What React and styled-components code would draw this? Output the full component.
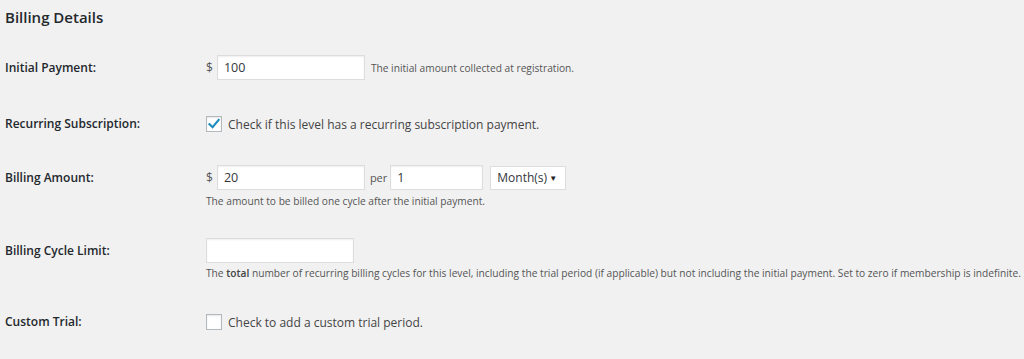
import React from 'react';
import styled, { createGlobalStyle } from 'styled-components';

const Global = createGlobalStyle`
  html, body {
    margin: 0;
    padding: 0;
    background: #f1f1f1;
  }
  body {
    font-family: "Open Sans", "Noto Sans", sans-serif;
    color: #23282d;
  }
`

const Page = styled.div`
  padding: 0 5px;
  width: 1024px;
  box-sizing: border-box;
`

const Title = styled.h2`
  margin: 0;
  padding-top: 7px;
  font-size: 15px;
  font-weight: 600;
  line-height: 20px;
  color: #23282d;
  height: 48px;
`

const Row = styled.div`
  display: flex;
  align-items: flex-start;
  margin-top: ${p => p.$top}px;
`

const Label = styled.div`
  width: 201px;
  flex-shrink: 0;
  font-size: 12px;
  font-weight: 600;
  line-height: ${p => p.$lh}px;
`

const Field = styled.div`
  display: flex;
  flex-direction: column;
`

const Line = styled.div`
  display: flex;
  align-items: center;
  height: ${p => p.$h}px;
`

const Prefix = styled.span`
  font-size: ${p => p.$fs || 12}px;
  color: #555;
  margin-right: ${p => p.$mr}px;
  margin-left: ${p => p.$ml || 0}px;
`

const Input = styled.input`
  box-sizing: border-box;
  width: ${p => p.$w}px;
  height: 25px;
  border: 1px solid #ddd;
  box-shadow: inset 0 1px 2px rgba(0, 0, 0, 0.07);
  background: #fff;
  font-family: inherit;
  font-size: 12.5px;
  color: #32373c;
  padding: 0 6px;
  margin: 0;
  outline: none;
`

const Hint = styled.span`
  font-size: 10.2px;
  color: #555;
  margin-left: ${p => p.$ml || 0}px;
  margin-top: ${p => p.$mt || 0}px;
  line-height: 14px;
  white-space: nowrap;
  b {
    font-weight: 600;
    color: #444;
  }
`

const Select = styled.div`
  box-sizing: border-box;
  height: 24px;
  width: 76px;
  margin-left: 7px;
  display: flex;
  align-items: center;
  justify-content: space-between;
  padding: 0 8px 0 6px;
  background: #fff;
  border: 1px solid #ddd;
  font-size: 12px;
  color: #32373c;
  span:last-child {
    font-size: 8px;
    color: #222;
  }
`

const Box = styled.span`
  box-sizing: border-box;
  width: 16px;
  height: 16px;
  border: 1px solid #b4b9be;
  background: #fff;
  box-shadow: inset 0 1px 2px rgba(0, 0, 0, 0.1);
  display: inline-flex;
  align-items: center;
  justify-content: center;
  margin-right: 6px;
`

const CheckText = styled.span`
  font-size: 12px;
  color: #444;
`

const Check = ({ checked }) => (
  <Box>
    {checked && (
      <svg width="14" height="14" viewBox="0 0 14 14">
        <path d="M2.5 7.2 L5.6 10.2 L11.6 3" fill="none" stroke="#1e8cbe" strokeWidth="2.2" strokeLinecap="square" />
      </svg>
    )}
  </Box>
)

const App = () => {
  return (
    <Page>
      <Global />
      <Title>Billing Details</Title>

      <Row $top={0}>
        <Label $lh={25}>Initial Payment:</Label>
        <Line $h={25}>
          <Prefix $mr={4}>$</Prefix>
          <Input $w={148} defaultValue="100" />
          <Hint $ml={6}>The initial amount collected at registration.</Hint>
        </Line>
      </Row>

      <Row $top={36}>
        <Label $lh={16}>Recurring Subscription:</Label>
        <Line $h={16}>
          <Check checked />
          <CheckText>Check if this level has a recurring subscription payment.</CheckText>
        </Line>
      </Row>

      <Row $top={33}>
        <Label $lh={25}>Billing Amount:</Label>
        <Field>
          <Line $h={25}>
            <Prefix $mr={4}>$</Prefix>
            <Input $w={148} defaultValue="20" />
            <Prefix $fs={11} $ml={5} $mr={3}>per</Prefix>
            <Input $w={93} defaultValue="1" />
            <Select>
              <span>Month(s)</span>
              <span>▼</span>
            </Select>
          </Line>
          <Hint $mt={4}>The amount to be billed one cycle after the initial payment.</Hint>
        </Field>
      </Row>

      <Row $top={30}>
        <Label $lh={25}>Billing Cycle Limit:</Label>
        <Field>
          <Line $h={25}>
            <Input $w={148} />
          </Line>
          <Hint $mt={3}>
            The <b>total</b> number of recurring billing cycles for this level, including the trial period (if applicable) but not including the initial payment. Set to zero if membership is indefinite.
          </Hint>
        </Field>
      </Row>

      <Row $top={34}>
        <Label $lh={16}>Custom Trial:</Label>
        <Line $h={16}>
          <Check />
          <CheckText>Check to add a custom trial period.</CheckText>
        </Line>
      </Row>
    </Page>
  )
}

export default App
